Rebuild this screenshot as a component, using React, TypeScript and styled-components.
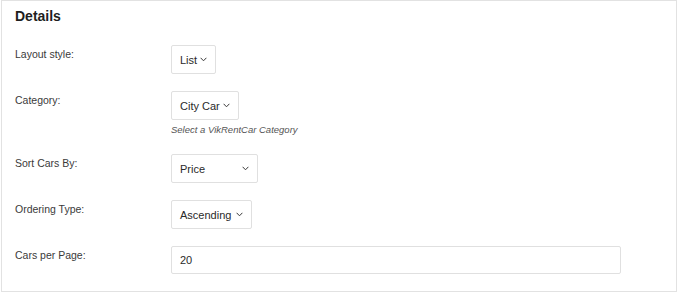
import React from 'react';
import styled, { createGlobalStyle } from 'styled-components';

const GlobalStyle = createGlobalStyle`
  html, body {
    margin: 0;
    padding: 0;
    background: #ffffff;
  }
  body {
    font-family: "Liberation Sans", Arial, sans-serif;
    color: #1e1e1e;
  }
`;

const Panel = styled.section`
  box-sizing: border-box;
  margin-left: 1px;
  width: 676px;
  height: 292px;
  border: 1px solid #e2e2e2;
  padding: 5px 13px 0 13px;
  background: #fff;
`;

const Title = styled.h2`
  margin: 0 0 19px 0;
  font-size: 14px;
  line-height: 20px;
  font-weight: 700;
  color: #1e1e1e;
`;

const Form = styled.div`
  display: flex;
  flex-direction: column;
  gap: 17px;
`;

const Row = styled.div`
  display: grid;
  grid-template-columns: 156px 1fr;
  align-items: start;
`;

const Label = styled.label`
  padding-top: 2px;
  font-size: 10.5px;
  line-height: 14px;
  color: #3a3a3a;
`;

const Field = styled.div`
  display: flex;
  flex-direction: column;
  align-items: flex-start;
`;

const SelectBox = styled.div<{ $width: number }>`
  box-sizing: border-box;
  width: ${p => p.$width}px;
  height: 29px;
  display: flex;
  align-items: center;
  justify-content: space-between;
  padding: 0 8px 0 8px;
  border: 1px solid #e0e0e0;
  border-radius: 2px;
  font-size: 11px;
  color: #2a2a2a;
  background: #fff;
`;

const Chevron = styled.svg`
  flex: none;
  width: 7px;
  height: 5px;
`;

const Help = styled.div`
  margin-top: 3px;
  font-size: 9.5px;
  line-height: 14px;
  font-style: italic;
  color: #555;
`;

const TextInput = styled.div`
  box-sizing: border-box;
  width: 450px;
  height: 28px;
  display: flex;
  align-items: center;
  padding: 0 8px;
  border: 1px solid #e0e0e0;
  border-radius: 2px;
  font-size: 11px;
  color: #2a2a2a;
`;

const Select = ({ value, width }: { value: string; width: number }) => (
  <SelectBox $width={width}>
    <span>{value}</span>
    <Chevron viewBox="0 0 7 5">
      <path d="M0.6 0.8 L3.5 3.8 L6.4 0.8" fill="none" stroke="#3a3a3a" strokeWidth="1" />
    </Chevron>
  </SelectBox>
);

export default function App() {
  return (
    <>
      <GlobalStyle />
      <Panel>
        <Title>Details</Title>
        <Form>
          <Row>
            <Label>Layout style:</Label>
            <Field>
              <Select value="List" width={45} />
            </Field>
          </Row>
          <Row>
            <Label>Category:</Label>
            <Field>
              <Select value="City Car" width={68} />
              <Help>Select a VikRentCar Category</Help>
            </Field>
          </Row>
          <Row>
            <Label>Sort Cars By:</Label>
            <Field>
              <Select value="Price" width={87} />
            </Field>
          </Row>
          <Row>
            <Label>Ordering Type:</Label>
            <Field>
              <Select value="Ascending" width={81} />
            </Field>
          </Row>
          <Row>
            <Label>Cars per Page:</Label>
            <Field>
              <TextInput>20</TextInput>
            </Field>
          </Row>
        </Form>
      </Panel>
    </>
  );
}
